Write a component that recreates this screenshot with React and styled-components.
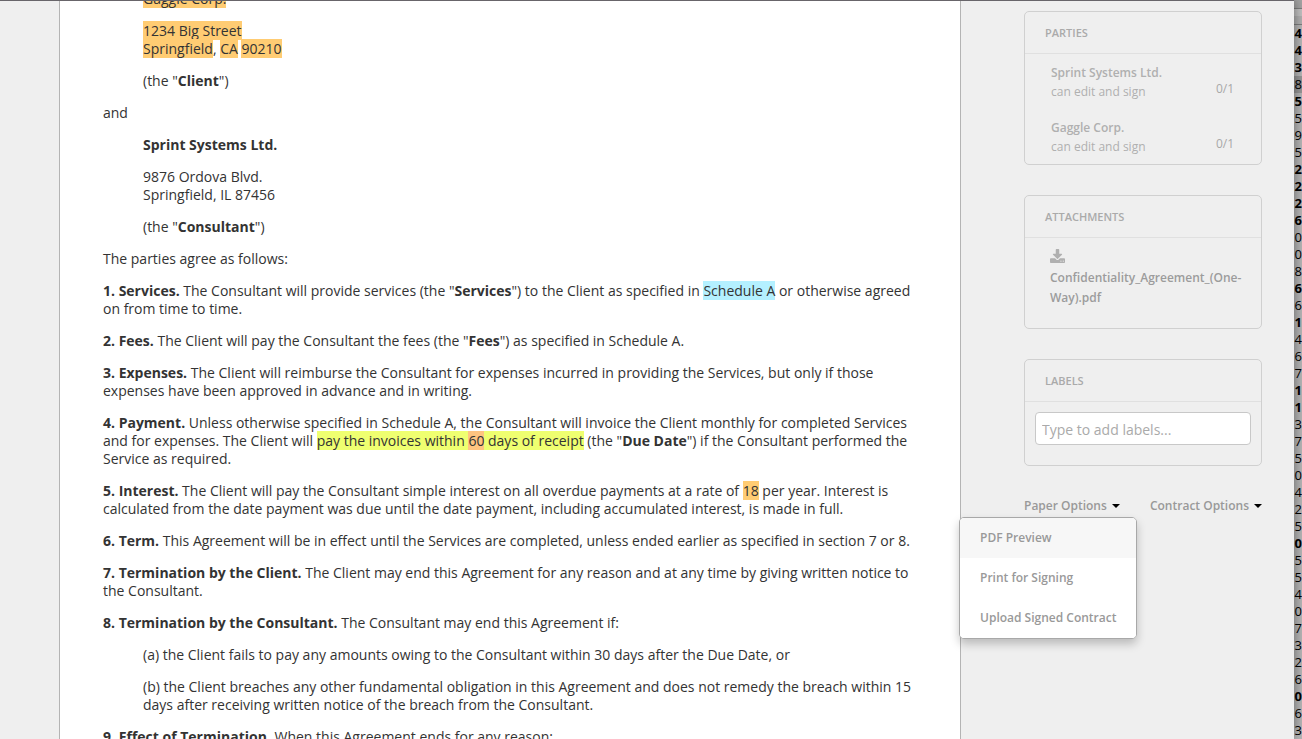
import React from 'react';
import styled, { createGlobalStyle, css } from 'styled-components';

const GlobalStyle = createGlobalStyle`
  *, *::before, *::after { box-sizing: border-box; }
  body {
    margin: 0;
    background: #efefef;
    color: #333;
    font-family: 'Open Sans', 'Noto Sans', sans-serif;
    font-size: 14px;
    line-height: 18px;
  }
`;

const Screen = styled.div`
  display: flex;
  height: 100vh;
  overflow: hidden;
`;

const Window = styled.div`
  display: flex;
  flex: 1;
  min-width: 0;
  padding-left: 59px;
  background: #efefef;
  border-top: 1px solid #68656a;
  z-index: 1;
  box-shadow: 0 0 12px rgba(0, 0, 0, 0.5);
`;

const Paper = styled.main`
  flex: 1;
  min-width: 0;
  padding: 0 43px;
  overflow: hidden;
  background: #fff;
  border: solid #b4b4b4;
  border-width: 0 1px;
`;

const Contract = styled.article`
  margin-top: -11px;
`;

const Clause = styled.p`
  margin: 0 0 14px;
  padding-left: ${(p) => (p.$indent ? '40px' : '0')};
`;

const marks = { field: '#ffcc73', link: '#b4f0ff', note: '#efff70', value: '#ffc480' };

const Mark = styled.mark`
  color: inherit;
  background: ${(p) => marks[p.$kind || 'field']};
`;

const Sidebar = styled.aside`
  display: flex;
  flex-direction: column;
  gap: 30px;
  width: 333px;
  padding: 10px 32px 0 63px;
`;

const Card = styled.section`
  border: 1px solid #d0d0d0;
  border-radius: 5px;
`;

const CardTitle = styled.h2`
  display: block;
  margin: 0;
  padding: 12px 20px 11px;
  border-bottom: 1px solid #e0e0e0;
  color: #aaa;
  font-size: 11px;
  font-weight: 600;
  line-height: 18px;
`;

const PartyList = styled.ul`
  display: flex;
  flex-direction: column;
  gap: 17px;
  margin: 0;
  padding: 9px 27px 8px 26px;
  list-style: none;
`;

const Party = styled.li`
  display: flex;
  justify-content: space-between;
  align-items: flex-end;
  color: #b0b0b0;
  font-size: 12px;
  line-height: 19px;
`;

const PartyName = styled.strong`
  display: block;
  font-weight: 600;
`;

const SignCount = styled.span`
  padding-bottom: 3px;
  color: #a8a8a8;
`;

const Attachment = styled.a`
  display: block;
  padding: 11px 20px 20px 25px;
  color: #9c9c9c;
  font-size: 12px;
  font-weight: 600;
  line-height: 20px;
  text-decoration: none;
`;

const AttachmentIcon = styled.svg`
  display: block;
  width: 15px;
  height: 14px;
  margin-bottom: 5px;
  fill: #b0b0b0;
`;

const LabelBox = styled.div`
  padding: 10px 10px 20px;
`;

const LabelInput = styled.input`
  display: block;
  width: 100%;
  height: 33px;
  padding: 2px 6px 0;
  border: 1px solid #c8c8c8;
  border-radius: 4px;
  background: #fff;
  font: inherit;
  &::placeholder { color: #aaa; opacity: 1; }
`;

const Options = styled.nav`
  display: flex;
  justify-content: space-between;
`;

const OptionGroup = styled.div`
  position: relative;
`;

const buttonReset = css`
  border: 0;
  background: none;
  color: #999;
  font: 600 12px/20px 'Open Sans', sans-serif;
  white-space: nowrap;
  cursor: pointer;
`;

const OptionButton = styled.button`
  ${buttonReset}
  display: flex;
  align-items: center;
  gap: 5px;
  padding: 0;
  &::after {
    content: '';
    border: solid transparent;
    border-width: 4px 4px 0;
    border-top-color: #000;
  }
`;

const Menu = styled.div`
  position: absolute;
  top: 21px;
  left: -65px;
  z-index: 2;
  overflow: hidden;
  border: 1px solid #a8a8a8;
  border-radius: 5px;
  background: #fff;
  box-shadow: 0 5px 10px rgba(0, 0, 0, 0.22);
`;

const MenuItem = styled.button`
  ${buttonReset}
  display: block;
  width: 100%;
  padding: 10px 20px;
  text-align: left;
  background: ${(p) => (p.$active ? '#f7f7f7' : '#fff')};
`;

const BackWindow = styled.div`
  width: 8px;
  overflow: hidden;
  background: #b9b9b9;
  color: #000;
`;

const BackBar = styled.div`
  height: ${(p) => p.$height}px;
  border-bottom: 1px solid #808080;
  background: ${(p) => p.$tone};
`;

const BackRow = styled.div`
  display: flex;
  justify-content: flex-end;
  height: 17px;
  font-size: 13px;
  line-height: 17px;
  font-weight: ${(p) => (p.$bold ? 700 : 400)};
  background: ${(p) => (p.$selected ? '#999' : 'transparent')};
`;

const counts = (
  '4b 4b 3b 8s 5b 5 9 5 2b 2b 2b 6b 0 0 8 6b 6 1b 4 6 7 1b 1b 3 7 5 0 4 2 5 0b 5 5 4 0 7 3 2 6 0b 6 3'
).split(' ');

const parties = ['Sprint Systems Ltd.', 'Gaggle Corp.'];

export default function App() {
  return (
    <Screen>
      <GlobalStyle />
      <Window>
        <Paper>
          <Contract>
            <Clause $indent><Mark>Gaggle Corp.</Mark></Clause>
            <Clause $indent>
              <Mark>1234 Big Street</Mark><br />
              <Mark>Springfield</Mark>, <Mark>CA</Mark> <Mark>90210</Mark>
            </Clause>
            <Clause $indent>(the "<b>Client</b>")</Clause>
            <Clause>and</Clause>
            <Clause $indent><b>Sprint Systems Ltd.</b></Clause>
            <Clause $indent>9876 Ordova Blvd.<br />Springfield, IL 87456</Clause>
            <Clause $indent>(the "<b>Consultant</b>")</Clause>
            <Clause>The parties agree as follows:</Clause>
            <Clause>
              <b>1. Services.</b> The Consultant will provide services (the "<b>Services</b>") to the
              Client as specified in <Mark $kind="link">Schedule A</Mark> or otherwise agreed on from
              time to time.
            </Clause>
            <Clause>
              <b>2. Fees.</b> The Client will pay the Consultant the fees (the "<b>Fees</b>") as
              specified in Schedule A.
            </Clause>
            <Clause>
              <b>3. Expenses.</b> The Client will reimburse the Consultant for expenses incurred in
              providing the Services, but only if those expenses have been approved in advance and in
              writing.
            </Clause>
            <Clause>
              <b>4. Payment.</b> Unless otherwise specified in Schedule A, the Consultant will invoice
              the Client monthly for completed Services and for expenses. The Client will{' '}
              <Mark $kind="note">
                pay the invoices within <Mark $kind="value">60</Mark> days of receipt
              </Mark>{' '}
              (the "<b>Due Date</b>") if the Consultant performed the Service as required.
            </Clause>
            <Clause>
              <b>5. Interest.</b> The Client will pay the Consultant simple interest on all overdue
              payments at a rate of <Mark>18</Mark> per year. Interest is calculated from the date
              payment was due until the date payment, including accumulated interest, is made in full.
            </Clause>
            <Clause>
              <b>6. Term.</b> This Agreement will be in effect until the Services are completed, unless
              ended earlier as specified in section 7 or 8.
            </Clause>
            <Clause>
              <b>7. Termination by the Client.</b> The Client may end this Agreement for any reason and
              at any time by giving written notice to the Consultant.
            </Clause>
            <Clause>
              <b>8. Termination by the Consultant.</b> The Consultant may end this Agreement if:
            </Clause>
            <Clause $indent>
              (a) the Client fails to pay any amounts owing to the Consultant within 30 days after the
              Due Date, or
            </Clause>
            <Clause $indent>
              (b) the Client breaches any other fundamental obligation in this Agreement and does not
              remedy the breach within 15 days after receiving written notice of the breach from the
              Consultant.
            </Clause>
            <Clause>
              <b>9. Effect of Termination.</b> When this Agreement ends for any reason:
            </Clause>
          </Contract>
        </Paper>

        <Sidebar>
          <Card>
            <CardTitle>PARTIES</CardTitle>
            <PartyList>
              {parties.map((name) => (
                <Party key={name}>
                  <div>
                    <PartyName>{name}</PartyName>
                    can edit and sign
                  </div>
                  <SignCount>0/1</SignCount>
                </Party>
              ))}
            </PartyList>
          </Card>

          <Card>
            <CardTitle>ATTACHMENTS</CardTitle>
            <Attachment href="#attachment">
              <AttachmentIcon viewBox="0 0 1664 1536" aria-hidden="true">
                <path d="M1280 1344q0-26-19-45t-45-19-45 19-19 45 19 45 45 19 45-19 19-45zm256 0q0-26-19-45t-45-19-45 19-19 45 19 45 45 19 45-19 19-45zm128-224v320q0 40-28 68t-68 28h-1472q-40 0-68-28t-28-68v-320q0-40 28-68t68-28h465l135 136q58 56 136 56t136-56l136-136h464q40 0 68 28t28 68zm-325-569q17 41-14 70l-448 448q-18 19-45 19t-45-19l-448-448q-31-29-14-70 17-39 59-39h256v-448q0-26 19-45t45-19h256q26 0 45 19t19 45v448h256q42 0 59 39z" />
              </AttachmentIcon>
              Confidentiality_Agreement_(One-Way).pdf
            </Attachment>
          </Card>

          <Card>
            <CardTitle as="label" htmlFor="labels">LABELS</CardTitle>
            <LabelBox>
              <LabelInput id="labels" type="text" placeholder="Type to add labels..." />
            </LabelBox>
          </Card>

          <Options>
            <OptionGroup>
              <OptionButton type="button" aria-expanded="true">Paper Options</OptionButton>
              <Menu>
                <MenuItem type="button" $active>PDF Preview</MenuItem>
                <MenuItem type="button">Print for Signing</MenuItem>
                <MenuItem type="button">Upload Signed Contract</MenuItem>
              </Menu>
            </OptionGroup>
            <OptionButton type="button">Contract Options</OptionButton>
          </Options>
        </Sidebar>
      </Window>

      <BackWindow>
        <BackBar $height={9} $tone="#a6a6a6" />
        <BackBar $height={16} $tone="linear-gradient(#c4c4c4 50%, #b4b4b4 50%)" />
        {counts.map((c, i) => (
          <BackRow key={i} $bold={c.endsWith('b')} $selected={c.endsWith('s')}>{c[0]}</BackRow>
        ))}
      </BackWindow>
    </Screen>
  );
}
